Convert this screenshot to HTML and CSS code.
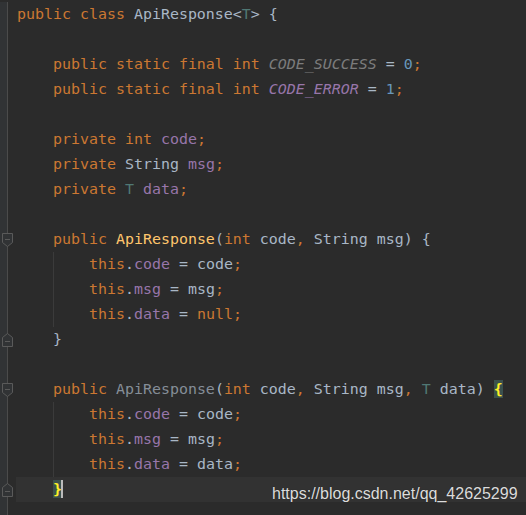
FILE: index.html
```html
<!DOCTYPE html>
<html>
<head>
<meta charset="utf-8">
<link rel="stylesheet" href="styles.css">
</head>
<body>
<div class="editor">
  <div class="ln"><div class="g"></div><div class="t"><span class="kw">public class </span>ApiResponse&lt;<span class="tp">T</span>&gt; {</div></div>
  <div class="ln"><div class="g"></div><div class="t"></div></div>
  <div class="ln"><div class="g"></div><div class="t">    <span class="kw">public static final int </span><span class="cu">CODE_SUCCESS</span> = <span class="num">0</span><span class="kw">;</span></div></div>
  <div class="ln"><div class="g"></div><div class="t">    <span class="kw">public static final int </span><span class="cf">CODE_ERROR</span> = <span class="num">1</span><span class="kw">;</span></div></div>
  <div class="ln"><div class="g"></div><div class="t"></div></div>
  <div class="ln"><div class="g"></div><div class="t">    <span class="kw">private int </span><span class="fd">code</span><span class="kw">;</span></div></div>
  <div class="ln"><div class="g"></div><div class="t">    <span class="kw">private </span>String <span class="fd">msg</span><span class="kw">;</span></div></div>
  <div class="ln"><div class="g"></div><div class="t">    <span class="kw">private </span><span class="tp">T </span><span class="fd">data</span><span class="kw">;</span></div></div>
  <div class="ln"><div class="g"></div><div class="t"></div></div>
  <div class="ln"><div class="g"><svg class="fold" width="13" height="14" viewBox="0 0 13 14"><path d="M1.5 0.5H11.5V9.5L6.5 13.5L1.5 9.5Z" fill="#313335" stroke="#5a5a5a"/><path d="M4 6.5H9" stroke="#5a5a5a"/></svg></div><div class="t">    <span class="kw">public </span><span class="md">ApiResponse</span>(<span class="kw">int </span>code<span class="kw">, </span>String msg) {</div></div>
  <div class="ln"><div class="g"></div><div class="t guide">        <span class="kw">this</span>.<span class="fd">code</span> = code<span class="kw">;</span></div></div>
  <div class="ln"><div class="g"></div><div class="t guide">        <span class="kw">this</span>.<span class="fd">msg</span> = msg<span class="kw">;</span></div></div>
  <div class="ln"><div class="g"></div><div class="t guide">        <span class="kw">this</span>.<span class="fd">data</span> = <span class="kw">null;</span></div></div>
  <div class="ln"><div class="g"><svg class="fold" width="13" height="14" viewBox="0 0 13 14"><path d="M1.5 13.5H11.5V4.5L6.5 0.5L1.5 4.5Z" fill="#313335" stroke="#5a5a5a"/><path d="M4 8.5H9" stroke="#5a5a5a"/></svg></div><div class="t">    }</div></div>
  <div class="ln"><div class="g"></div><div class="t"></div></div>
  <div class="ln"><div class="g"><svg class="fold" width="13" height="14" viewBox="0 0 13 14"><path d="M1.5 0.5H11.5V9.5L6.5 13.5L1.5 9.5Z" fill="#313335" stroke="#5a5a5a"/><path d="M4 6.5H9" stroke="#5a5a5a"/></svg></div><div class="t">    <span class="kw">public </span><span class="un">ApiResponse</span>(<span class="kw">int </span>code<span class="kw">, </span>String msg<span class="kw">, </span><span class="tp">T </span>data) <span class="br">{</span></div></div>
  <div class="ln"><div class="g"></div><div class="t guide">        <span class="kw">this</span>.<span class="fd">code</span> = code<span class="kw">;</span></div></div>
  <div class="ln"><div class="g"></div><div class="t guide">        <span class="kw">this</span>.<span class="fd">msg</span> = msg<span class="kw">;</span></div></div>
  <div class="ln"><div class="g"></div><div class="t guide">        <span class="kw">this</span>.<span class="fd">data</span> = data<span class="kw">;</span></div></div>
  <div class="ln"><div class="g"><svg class="fold" width="13" height="14" viewBox="0 0 13 14"><path d="M1.5 13.5H11.5V4.5L6.5 0.5L1.5 4.5Z" fill="#313335" stroke="#5a5a5a"/><path d="M4 8.5H9" stroke="#5a5a5a"/></svg></div><div class="t cur">    <span class="br">}</span><span class="caret"></span></div></div>
  <div class="ln"><div class="g"></div><div class="t"></div></div>
</div>
<div class="wm">https://blog.csdn.net/qq_42625299</div>
</body>
</html>
```

FILE: styles.css
```css
html, body {
  margin: 0;
  padding: 0;
  background: #2b2b2b;
  overflow: hidden;
  height: 100%;
}
.editor {
  padding-top: 2px;
  display: flex;
  flex-direction: column;
  font-family: "DejaVu Sans Mono", "Liberation Mono", monospace;
  font-size: 14.95px;
  color: #a9b7c6;
}
.ln {
  display: flex;
  height: 25px;
}
.g {
  width: 16px;
  flex: none;
  background: linear-gradient(to right, #313335 0, #313335 7px, #4b4b4b 7px, #4b4b4b 8px, #2b2b2b 8px);
  display: flex;
  align-items: center;
  justify-content: flex-start;
}
.fold {
  display: block;
  margin-left: 1px;
}
.t {
  flex: 1;
  padding-left: 1px;
  white-space: pre;
  line-height: 25px;
  position: relative;
}
.guide {
  background: linear-gradient(to right, transparent 37px, #3b3b3b 37px, #3b3b3b 38px, transparent 38px);
}
.cur {
  background-color: #323232;
}
.kw { color: #cc7832; }
.tp { color: #507874; }
.fd { color: #9876aa; }
.cf { color: #9876aa; font-style: italic; }
.cu { color: #7c7c7c; font-style: italic; }
.num { color: #6897bb; }
.md { color: #ffc66d; }
.un { color: #858e98; }
.br {
  color: #ffef28;
  font-weight: bold;
  background: #3b514d;
}
.caret {
  display: inline-block;
  width: 2px;
  height: 18px;
  background: #bbbbbb;
  vertical-align: -4px;
  margin-left: -1px;
}
.wm {
  position: absolute;
  left: 272px;
  top: 485px;
  font-family: "Liberation Sans", Arial, sans-serif;
  font-size: 16px;
  color: #dcdcdc;
  text-shadow: 0 0 1px rgba(0,0,0,0.4);
  white-space: nowrap;
}
```
